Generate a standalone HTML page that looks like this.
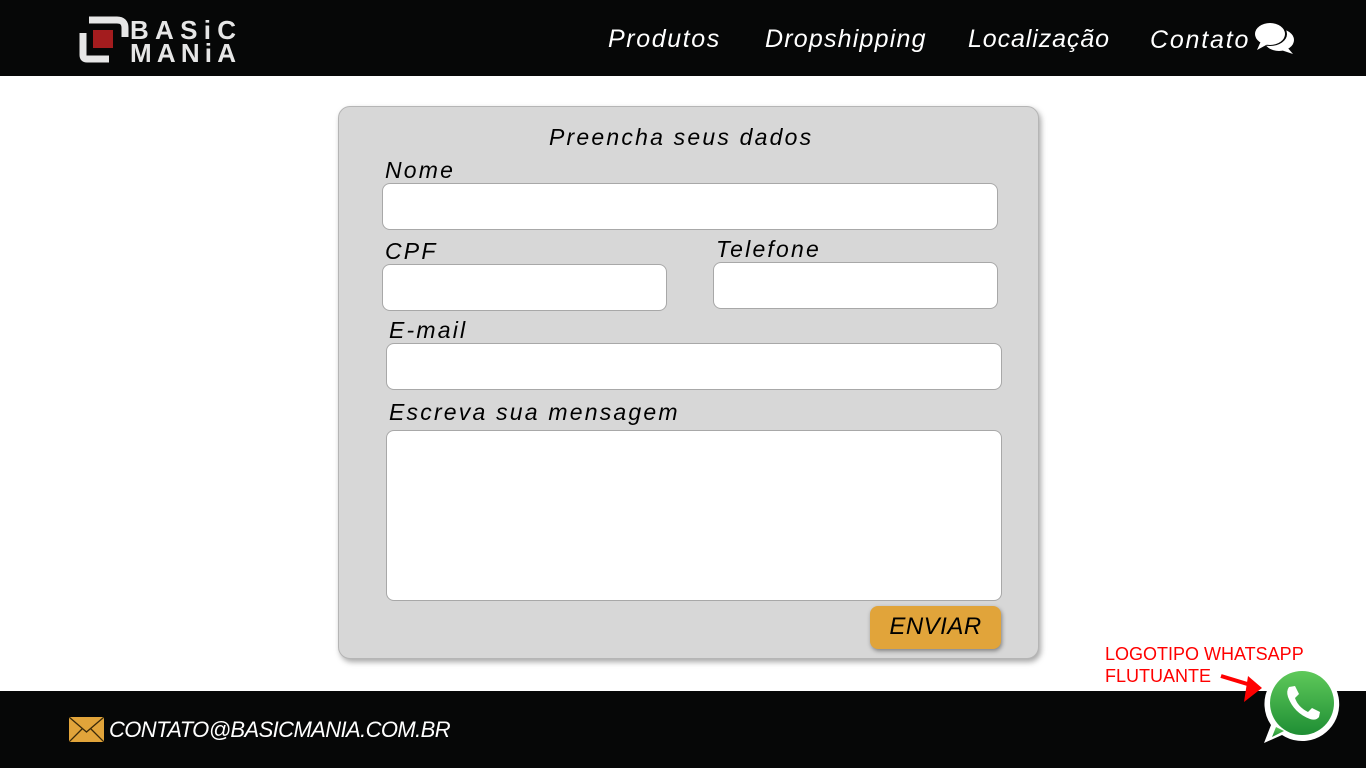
<!DOCTYPE html>
<html><head><meta charset="utf-8"><style>
*{margin:0;padding:0;box-sizing:border-box}
body{width:1366px;height:768px;background:#fff;font-family:"Liberation Sans",sans-serif;position:relative;overflow:hidden}
.i{font-style:italic}
header{position:absolute;left:0;top:0;width:1366px;height:76px;background:#060707}
.nav{position:absolute;top:25px;color:#fff;font-style:italic;font-size:25px;letter-spacing:1.6px;white-space:nowrap}
.card{position:absolute;left:338px;top:106px;width:701px;height:553px;background:#d7d7d7;border:1px solid #b5b5b5;border-radius:12px;box-shadow:2px 3px 6px rgba(0,0,0,.35)}
.lbl{position:absolute;font-style:italic;font-size:23px;color:#000;letter-spacing:2.2px;white-space:nowrap}
.inp{position:absolute;background:#fff;border:1px solid #a8a8a8;border-radius:8px}
footer{position:absolute;left:0;top:691px;width:1366px;height:77px;background:#060707}
</style></head><body>
<header>
<svg style="position:absolute;left:79px;top:15px" width="160" height="48" viewBox="0 0 160 48">
<path d="M10 5 H38 Q46 5 46 13 V22" stroke="#e6e6e6" stroke-width="7" fill="none"/>
<path d="M4 18 V40 Q4 44 8 44 H30" stroke="#e6e6e6" stroke-width="7" fill="none"/>
<rect x="14" y="15" width="20" height="18" fill="#a31c1e"/>
<text x="51" y="24" fill="#e6e6e6" font-family="Liberation Sans" font-weight="bold" font-size="26" textLength="106" lengthAdjust="spacing">BASiC</text>
<text x="51" y="47" fill="#e6e6e6" font-family="Liberation Sans" font-weight="bold" font-size="26" textLength="106" lengthAdjust="spacing">MANiA</text>
</svg>
<div class="nav" style="left:608px">Produtos</div>
<div class="nav" style="left:765px;letter-spacing:1.2px">Dropshipping</div>
<div class="nav" style="left:968px;letter-spacing:0.9px">Localização</div>
<div class="nav" style="left:1150px;top:26px;letter-spacing:1.8px">Contato</div>
<svg style="position:absolute;left:1253px;top:21px" width="43" height="35" viewBox="0 0 43 35">
<ellipse cx="26" cy="19" rx="15" ry="11" fill="#fff"/><path d="M34 26 L40 33 L28 29Z" fill="#fff"/>
<ellipse cx="17" cy="13" rx="17" ry="12" fill="#060707"/>
<ellipse cx="17" cy="13" rx="15" ry="11" fill="#fff"/><path d="M8 20 L4 29 L15 23Z" fill="#fff"/>
</svg>
</header>
<div class="card">
<div class="lbl" style="left:210px;top:17px">Preencha seus dados</div>
<div class="lbl" style="left:46px;top:50px">Nome</div>
<div class="inp" style="left:43px;top:76px;width:616px;height:47px"></div>
<div class="lbl" style="left:46px;top:131px">CPF</div>
<div class="inp" style="left:43px;top:157px;width:285px;height:47px"></div>
<div class="lbl" style="left:377px;top:129px">Telefone</div>
<div class="inp" style="left:374px;top:155px;width:285px;height:47px"></div>
<div class="lbl" style="left:50px;top:210px">E-mail</div>
<div class="inp" style="left:47px;top:236px;width:616px;height:47px"></div>
<div class="lbl" style="left:50px;top:292px">Escreva sua mensagem</div>
<div class="inp" style="left:47px;top:323px;width:616px;height:171px"></div>
<div style="position:absolute;left:531px;top:499px;width:131px;height:43px;background:#e1a43a;border-radius:8px;box-shadow:1px 2px 4px rgba(0,0,0,.4);font-style:italic;font-size:24px;text-align:center;line-height:42px;letter-spacing:.5px">ENVIAR</div>
</div>
<footer>
<svg style="position:absolute;left:69px;top:26px" width="35" height="25" viewBox="0 0 35 25"><rect width="35" height="25" fill="#e1a43a"/><path d="M0 0 L17.5 15 L35 0 M0 25 L13 12 M35 25 L22 12" stroke="#3a2a0a" stroke-width="1.3" fill="none"/></svg>
<div class="i" style="position:absolute;left:109px;top:26px;color:#fff;font-size:22px;letter-spacing:-0.6px;white-space:nowrap">CONTATO@BASICMANIA.COM.BR</div>
</footer>
<div style="position:absolute;left:1105px;top:643px;color:#f00;font-size:18px;line-height:22px">LOGOTIPO WHATSAPP<br>FLUTUANTE</div>
<svg style="position:absolute;left:1218px;top:668px" width="48" height="36" viewBox="0 0 48 36"><path d="M3 8 L36 18" stroke="#f00" stroke-width="4"/><path d="M44 20 L30 8 L26 34Z" fill="#f00"/></svg>
<svg style="position:absolute;left:1262px;top:665px" width="80" height="80" viewBox="0 0 80 80">
<defs><linearGradient id="g" x1="0" y1="0" x2="0" y2="1"><stop offset="0" stop-color="#5fc95a"/><stop offset="1" stop-color="#1f8e34"/></linearGradient></defs>
<path d="M40 2 A37 37 0 1 1 20 70 L2 78 L9 60 A37 37 0 0 1 40 2Z" fill="#fff"/>
<circle cx="40" cy="38" r="32" fill="url(#g)"/>
<path d="M14 62 L10 72 L22 66Z" fill="url(#g)"/>
<path d="M27 22 Q24 26 26 32 Q32 48 48 54 Q54 56 57 52 L58 47 L50 43 L46 47 Q36 42 33 33 L37 29 L33 21Z" fill="#fff"/>
</svg>
</body></html>
